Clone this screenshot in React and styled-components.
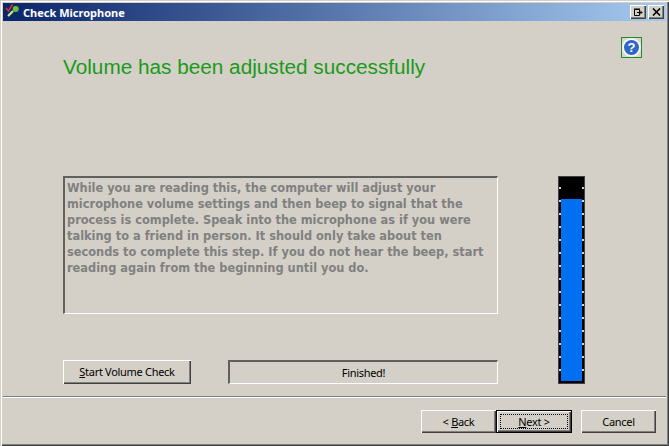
import React from "react";
import styled, { createGlobalStyle } from "styled-components";

const Global = createGlobalStyle`
  html, body { margin: 0; padding: 0; background: #d4d0c8; }
  * { box-sizing: border-box; }
`;

const Win = styled.div`
  width: 669px;
  height: 446px;
  padding: 3px;
  display: flex;
  flex-direction: column;
  background: #d4d0c8;
  overflow: hidden;
  box-shadow: inset 1px 1px 0 #d4d0c8, inset 2px 2px 0 #ffffff, inset -1px -1px 0 #404040, inset -2px -2px 0 #808080;
  font-family: "Liberation Sans", Arial, sans-serif;
  color: #000;
`;

const TitleBar = styled.div`
  height: 18px;
  flex: none;
  display: flex;
  align-items: center;
  padding: 0 2px;
  background: linear-gradient(to right, #0a246a, #a6caf0);
`;

const TitleText = styled.span`
  margin-left: 2px;
  flex: 1;
  color: #fff;
  font: bold 11px "Noto Sans", Tahoma, sans-serif;
`;

const CapButton = styled.div`
  width: 16px;
  height: 14px;
  display: flex;
  align-items: center;
  justify-content: center;
  background: #d4d0c8;
  margin-left: ${(p) => (p.$gap ? "2px" : "0")};
  box-shadow: inset 1px 1px 0 #fff, inset -1px -1px 0 #404040, inset -2px -2px 0 #808080;
`;

const Header = styled.div`
  height: 155px;
  flex: none;
  display: grid;
  grid-template-columns: 1fr 21px;
  align-items: start;
  padding: 16px 24px 0 60px;
`;

const Heading = styled.h1`
  margin: 18px 0 0;
  font-size: 20.75px;
  line-height: 24px;
  font-weight: normal;
  color: #1a9a1a;
  white-space: nowrap;
`;

const HelpButton = styled.div`
  width: 21px;
  height: 21px;
  display: flex;
  align-items: center;
  justify-content: center;
  border: 1px solid #1f8f1f;
  background: #d8d6d0;
`;

const HelpDisc = styled.div`
  width: 15px;
  height: 15px;
  border-radius: 50%;
  display: flex;
  align-items: center;
  justify-content: center;
  background: #2f66c8;
  box-shadow: 0 0 0 2px #f4f4f4;
  color: #fff;
  font: bold 13px/1 "Liberation Sans", Arial, sans-serif;
`;

const Main = styled.div`
  flex: 1;
  display: flex;
  align-items: flex-start;
  padding-left: 60px;
`;

const LeftColumn = styled.div`
  width: 435px;
  display: flex;
  flex-direction: column;
  gap: 46px;
`;

const Sunken = styled.div`
  border: 2px solid;
  border-color: #606060 #fff #fff #606060;
  border-right-width: 1px;
  border-bottom-width: 1px;
`;

const ReadBox = styled(Sunken)`
  height: 138px;
  padding: 2px 0 0 2px;
  color: #808080;
  font: bold 11.4px/16px "DejaVu Sans", Verdana, sans-serif;
  white-space: pre;
`;

const Controls = styled.div`
  display: flex;
  gap: 37px;
`;

const Button = styled.div`
  width: ${(p) => p.$w}px;
  height: ${(p) => p.$h || 24}px;
  padding-bottom: 1px;
  display: flex;
  align-items: center;
  justify-content: center;
  font: 11px "Noto Sans", Tahoma, sans-serif;
  letter-spacing: -0.3px;
  background: #d4d0c8;
  box-shadow: inset 1px 1px 0 #fff, inset -1px -1px 0 #404040, inset -2px -2px 0 #808080;
`;

const DefaultButton = styled(Button)`
  border: 1px solid #000;
  padding: 3px;
`;

const FocusRing = styled.div`
  width: 100%;
  height: 100%;
  display: flex;
  align-items: center;
  justify-content: center;
  border: 1px dotted #000;
`;

const Status = styled(Sunken)`
  width: 270px;
  height: 24px;
  padding-bottom: 1px;
  display: flex;
  align-items: center;
  justify-content: center;
  font: 11px "Noto Sans", Tahoma, sans-serif;
  letter-spacing: -0.3px;
`;

const Meter = styled.div`
  width: 27px;
  height: 208px;
  margin-left: 60px;
  display: flex;
  background: #000;
  border: 1px solid #404040;
`;

const Rail = styled.div`
  width: 2px;
  margin-bottom: 3px;
  background: repeating-linear-gradient(to bottom, transparent 0 10px, #d4d0c8 10px 12px, transparent 12px 13px);
`;

const Track = styled.div`
  flex: 1;
  padding: 22px 0 2px;
  display: flex;
`;

const Fill = styled.div`
  flex: 1;
  background: #0070f0;
`;

const Rule = styled.div`
  height: 2px;
  flex: none;
  margin-top: 12px;
  border-top: 1px solid #808080;
  border-bottom: 1px solid #fff;
`;

const Footer = styled.div`
  flex: none;
  display: flex;
  justify-content: flex-end;
  padding: 12px 10px 10px 0;
`;

const Spacer = styled.div`
  width: 9px;
`;

const WindowIcon = () => (
  <svg width="16" height="16" viewBox="0 0 16 16">
    <path d="M1 4l2.5 3L7.5 0.5" fill="none" stroke="#d0303c" strokeWidth="1.6" />
    <path d="M3 12l5-5" stroke="#d8e8a0" strokeWidth="2" />
    <path d="M4 13l5-5" stroke="#2f6a20" strokeWidth="1" />
    <circle cx="10.7" cy="5" r="3" fill="#6cc038" />
  </svg>
);

const App = () => {
  return (
    <Win>
      <Global />
      <TitleBar>
        <WindowIcon />
        <TitleText>Check Microphone</TitleText>
        <CapButton>
          <svg width="10" height="9" viewBox="0 0 10 9">
            <path d="M1.5 1.5h5v6h-5zM1 1h6" fill="none" stroke="#000" />
            <path d="M4 4.5h5M7 2.5l2 2-2 2" fill="none" stroke="#000" />
          </svg>
        </CapButton>
        <CapButton $gap>
          <svg width="9" height="8" viewBox="0 0 9 8">
            <path d="M1 0.5l7 7M8 0.5l-7 7" stroke="#000" strokeWidth="1.6" />
          </svg>
        </CapButton>
      </TitleBar>
      <Header>
        <Heading>Volume has been adjusted successfully</Heading>
        <HelpButton>
          <HelpDisc>?</HelpDisc>
        </HelpButton>
      </Header>
      <Main>
        <LeftColumn>
          <ReadBox>
            {`While you are reading this, the computer will adjust your
microphone volume settings and then beep to signal that the
process is complete. Speak into the microphone as if you were
talking to a friend in person. It should only take about ten
seconds to complete this step. If you do not hear the beep, start
reading again from the beginning until you do.`}
          </ReadBox>
          <Controls>
            <Button $w={128}>
              <span><u>S</u>tart Volume Check</span>
            </Button>
            <Status>Finished!</Status>
          </Controls>
        </LeftColumn>
        <Meter>
          <Rail />
          <Track>
            <Fill />
          </Track>
          <Rail />
        </Meter>
      </Main>
      <Rule />
      <Footer>
        <Button $w={75} $h={23}>
          <span>&lt; <u>B</u>ack</span>
        </Button>
        <DefaultButton $w={76} $h={23}>
          <FocusRing>
            <span><u>N</u>ext &gt;</span>
          </FocusRing>
        </DefaultButton>
        <Spacer />
        <Button $w={75} $h={23}>Cancel</Button>
      </Footer>
    </Win>
  );
};

export default App;
